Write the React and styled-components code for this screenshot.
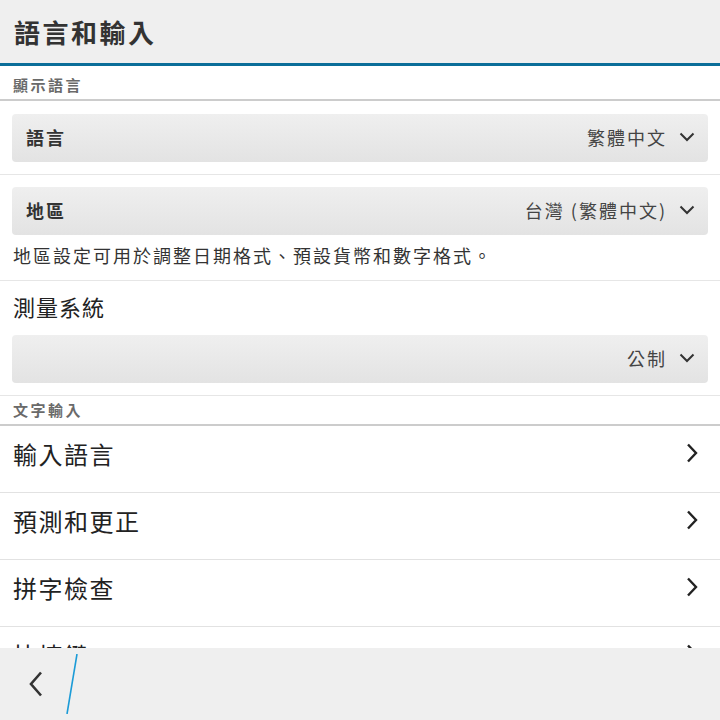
import React from 'react';
import styled, { createGlobalStyle } from 'styled-components';

const GlobalStyle = createGlobalStyle`
  html, body {
    margin: 0;
    padding: 0;
    background: #ffffff;
  }
  body {
    font-family: "Noto Sans CJK TC", "Noto Sans", sans-serif;
    color: #222;
  }
`;

const Screen = styled.div`
  width: 720px;
  height: 720px;
  display: flex;
  flex-direction: column;
  overflow: hidden;
  background: #fff;
`;

const TitleBar = styled.header`
  height: 63px;
  flex-shrink: 0;
  display: flex;
  align-items: center;
  padding-left: 14px;
  background: #efefef;
  border-bottom: 3px solid #0b6e99;
  font-size: 26px;
  font-weight: 700;
  color: #333;
  letter-spacing: 2.5px;
`;

const Content = styled.main`
  flex: 1;
  overflow: hidden;
`;

const SectionHeader = styled.div`
  height: ${p => p.$height}px;
  display: flex;
  align-items: flex-end;
  padding: 0 0 4px 13px;
  box-sizing: border-box;
  border-bottom: 2px solid #cccccc;
  font-size: 15px;
  line-height: 20px;
  font-weight: 700;
  color: #6a6a6a;
  letter-spacing: 2.5px;
`;

const Group = styled.section`
  padding: ${p => p.$top}px 12px ${p => p.$bottom}px;
  border-bottom: 1px solid #e6e6e6;
`;

const Dropdown = styled.div`
  height: 48px;
  display: flex;
  align-items: center;
  justify-content: space-between;
  padding: 0 13px 0 14px;
  border-radius: 4px;
  background: linear-gradient(#efefef, #e3e3e3);
  margin-top: ${p => p.$mt || 0}px;
`;

const DropLabel = styled.span`
  font-size: 18px;
  font-weight: 700;
  color: #333;
  letter-spacing: 2px;
  padding-bottom: 2px;
`;

const DropValue = styled.span`
  display: flex;
  align-items: center;
  gap: 12px;
  font-size: 18px;
  color: #444;
  letter-spacing: 2px;
  padding-bottom: 2px;
`;

const Note = styled.p`
  margin: 8px 0 0 1px;
  font-size: 18px;
  line-height: 24px;
  color: #333;
  letter-spacing: 2px;
`;

const FieldTitle = styled.div`
  font-size: 22px;
  line-height: 26px;
  padding: 0 0 4px 1px;
  color: #222;
  letter-spacing: 1px;
`;

const ListItem = styled.div`
  height: 67px;
  box-sizing: border-box;
  display: flex;
  align-items: center;
  justify-content: space-between;
  padding: 0 22px 12px 13px;
  border-bottom: 1px solid #e2e2e2;
  font-size: 24px;
  color: #222;
  letter-spacing: 1.5px;
`;

const BottomBar = styled.footer`
  height: 72px;
  flex-shrink: 0;
  display: flex;
  align-items: center;
  background: #efefef;
  padding-left: 28px;
  gap: 22px;
`;

const ChevronDown = () => (
  <svg width="16" height="10" viewBox="0 0 16 10">
    <path d="M1.5 1.5 L8 8 L14.5 1.5" fill="none" stroke="#333" strokeWidth="2" />
  </svg>
);

const ChevronRight = () => (
  <svg width="12" height="20" viewBox="0 0 12 20">
    <path d="M2 1.5 L10 10 L2 18.5" fill="none" stroke="#222" strokeWidth="2.4" />
  </svg>
);

const BackIcon = () => (
  <svg width="16" height="26" viewBox="0 0 16 26">
    <path d="M13 1.5 L3 13 L13 24.5" fill="none" stroke="#333" strokeWidth="2.6" />
  </svg>
);

const Divider = () => (
  <svg width="14" height="60" viewBox="0 0 14 60">
    <path d="M11 0 L1 60" stroke="#1b9bd7" strokeWidth="1.6" />
  </svg>
);

const items = ['輸入語言', '預測和更正', '拼字檢查', '快捷鍵'];

export default function App() {
  return (
    <Screen>
      <GlobalStyle />
      <TitleBar>語言和輸入</TitleBar>
      <Content>
        <SectionHeader $height={35}>顯示語言</SectionHeader>
        <Group $top={13} $bottom={12}>
          <Dropdown>
            <DropLabel>語言</DropLabel>
            <DropValue>繁體中文<ChevronDown /></DropValue>
          </Dropdown>
        </Group>
        <Group $top={12} $bottom={13}>
          <Dropdown>
            <DropLabel>地區</DropLabel>
            <DropValue>台灣 (繁體中文)<ChevronDown /></DropValue>
          </Dropdown>
          <Note>地區設定可用於調整日期格式、預設貨幣和數字格式。</Note>
        </Group>
        <Group $top={12} $bottom={12}>
          <FieldTitle>測量系統</FieldTitle>
          <Dropdown $mt={12}>
            <span />
            <DropValue>公制<ChevronDown /></DropValue>
          </Dropdown>
        </Group>
        <SectionHeader $height={30}>文字輸入</SectionHeader>
        {items.map(item => (
          <ListItem key={item}>
            {item}
            <ChevronRight />
          </ListItem>
        ))}
      </Content>
      <BottomBar>
        <BackIcon />
        <Divider />
      </BottomBar>
    </Screen>
  );
}
